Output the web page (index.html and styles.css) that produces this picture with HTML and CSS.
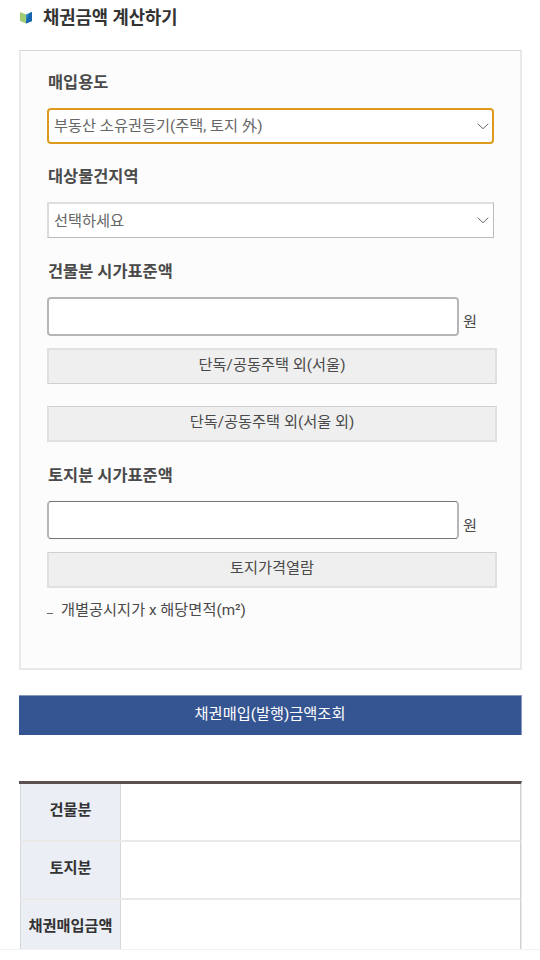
FILE: index.html
```
<!DOCTYPE html>
<html lang="ko">
<head>
  <meta charset="UTF-8" />
  <meta name="viewport" content="width=device-width, initial-scale=1.0" />
  <title>채권금액 계산하기</title>
  <link rel="stylesheet" href="styles.css">
</head>
<body>
  <main class="content">
    <h1 class="title">
      <svg class="title-icon" viewBox="0 0 12 13" aria-hidden="true">
        <path fill="#9fcc74" d="M0 1 6 3.4V12.6L0 10Z" />
        <path fill="#2387c4" d="M6 3.4 12 1V10L6 12.6Z" />
        <path fill="#1766ad" d="M9.4 2 12 1V10L6 12.6V11.2Z" />
      </svg>
      <span>채권금액 계산하기</span>
    </h1>

    <form class="panel">
      <h2 class="label">매입용도</h2>
      <div class="select focused">
        <span>부동산 소유권등기(주택, 토지 外)</span>
        <svg class="arrow" viewBox="0 0 12 7"><path d="M.7.7 6 5.7 11.3.7" /></svg>
      </div>

      <h2 class="label">대상물건지역</h2>
      <div class="select">
        <span>선택하세요</span>
        <svg class="arrow" viewBox="0 0 12 7"><path d="M.7.7 6 5.7 11.3.7" /></svg>
      </div>

      <h2 class="label price-label">건물분 시가표준액</h2>
      <div class="amount">
        <input type="text" class="input building">
        <span>원</span>
      </div>
      <button type="button" class="btn">단독/공동주택 외(서울)</button>
      <button type="button" class="btn second">단독/공동주택 외(서울 외)</button>

      <h2 class="label">토지분 시가표준액</h2>
      <div class="amount land-amount">
        <input type="text" class="input">
        <span>원</span>
      </div>
      <button type="button" class="btn land">토지가격열람</button>
      <p class="note">개별공시지가 x 해당면적(m²)</p>
    </form>

    <button type="button" class="submit">채권매입(발행)금액조회</button>

    <div class="result">
      <div class="row"><div class="th">건물분</div><div class="td"></div></div>
      <div class="row"><div class="th">토지분</div><div class="td"></div></div>
      <div class="row"><div class="th">채권매입금액</div><div class="td"></div></div>
    </div>
  </main>
  <div class="bottom-bar"></div>
</body>
</html>
```
FILE: styles.css
```
* {
  box-sizing: border-box;
}

body {
  margin: 0;
  height: 960px;
  overflow: hidden;
  background: #fff;
  color: #4a4a4a;
  font-family: Roboto, "Noto Sans CJK KR", sans-serif;
  font-size: 15.25px;
  line-height: 22px;
}

.content {
  height: 949px;
  padding: 0 18px 0 19px;
  overflow: hidden;
}

.title {
  display: flex;
  align-items: center;
  height: 34px;
  margin: 0 0 16px;
  color: #333;
  font-size: 17.7px;
  font-weight: 700;
}

.title span {
  padding-top: 2px;
}

.title-icon {
  width: 12px;
  height: 13px;
  margin: 0 11px 0 1px;
}

.panel {
  height: 620px;
  padding: 14px 23px 0 26px;
  background: #fcfcfc;
  border: 2px solid #e9e9e9;
  border-top: 1px solid #d7d7d7;
}

.label {
  height: 32px;
  margin: 0 0 11px 1px;
  color: #4a4a4a;
  font-size: 16.4px;
  font-weight: 700;
  line-height: 36px;
}

.price-label {
  margin-top: 16px;
}

.select {
  display: flex;
  align-items: center;
  justify-content: space-between;
  width: 447px;
  height: 36px;
  margin-bottom: 15px;
  padding: 0 4px 0 5px;
  background: #fff;
  border: 1px solid #bbb;
  border-top: 2px solid #dfdfdf;
  border-left: 2px solid #dcdcdc;
  color: #666;
}

.select span {
  padding-top: 1px;
}

.focused {
  padding: 0 3px 0 5px;
  border: 2px solid #dd9a1c;
  border-radius: 4px;
}

.focused span {
  padding: 0 0 1px;
}

.arrow {
  width: 12px;
  height: 7px;
  fill: none;
  stroke: #666;
  stroke-width: 1;
}

.amount {
  display: flex;
  height: 39px;
  margin: 0 0 12px;
}

.amount span {
  margin: 14px 0 0 4px;
}

.input {
  width: 412px;
  height: 100%;
  padding: 0 8px;
  background: #fff;
  border: 1px solid #767676;
  border-left: 2px solid #b6b6b6;
  border-right: 2px solid #b6b6b6;
  border-radius: 4px;
  font: inherit;
}

.building {
  border: 2px solid #b6b6b6;
}

.btn {
  display: block;
  width: 450px;
  height: 36px;
  padding: 0 0 3px;
  background: #efefef;
  border: 2px solid #e0e0e0;
  border-bottom: 1px solid #cfcfcf;
  color: #4a4a4a;
  font: inherit;
}

.second {
  margin: 22px 0 16px;
}

.second,
.land {
  border-top: 1px solid #cfcfcf;
  border-bottom: 2px solid #e0e0e0;
}

.land-amount {
  height: 38px;
  margin-bottom: 13px;
}

.note {
  display: flex;
  align-items: center;
  height: 22px;
  margin: 11px 0 0;
}

.note::before {
  content: "";
  width: 6px;
  height: 1px;
  margin: 6px 8px 0 0;
  background: #666;
}

.submit {
  display: block;
  width: 503px;
  height: 40px;
  margin: 25px 0 46px;
  padding: 0 0 3px;
  background: #355592;
  border: 1px solid #8598bd;
  border-width: 1px 1px 0 0;
  color: #fff;
  font: inherit;
}

.result {
  border-top: 3px solid #5b5150;
  border-right: 1px solid #e9e9e9;
}

.row {
  display: flex;
  height: 58px;
  margin-left: 1px;
  border-left: 1px solid #d7d7d7;
  border-right: 1px solid #d0d0d0;
  border-bottom: 2px solid #e9e9e9;
}

.th {
  width: 100px;
  background: #ebeef5;
  border-right: 1px solid #d7d7d7;
  color: #333;
  font-weight: 700;
  line-height: 53px;
  text-align: center;
}

.td {
  flex: 1;
}

.bottom-bar {
  height: 11px;
  border-top: 1px solid #eff2f5;
  background: #fff;
}
```
